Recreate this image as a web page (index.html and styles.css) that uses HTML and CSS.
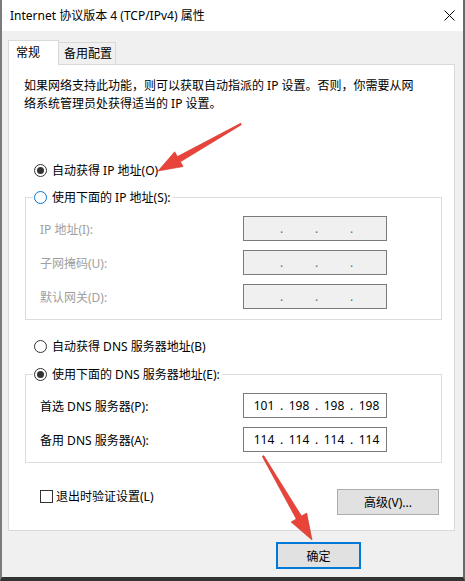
FILE: index.html
```html
<!DOCTYPE html>
<html lang="zh-CN">
<head>
<meta charset="utf-8">
<title>Internet 协议版本 4 (TCP/IPv4) 属性</title>
<link rel="stylesheet" href="styles.css">
</head>
<body>
<div class="window">
  <div class="titlebar">
    <span class="title">Internet 协议版本 4 (TCP/IPv4) 属性</span>
    <svg class="close" width="11" height="11" viewBox="0 0 11 11"><path d="M0.5 0.5 L10.5 10.5 M10.5 0.5 L0.5 10.5" stroke="#000" stroke-width="1" fill="none"/></svg>
  </div>
  <div class="client">
    <div class="tabs">
      <div class="tab active">常规</div>
      <div class="tab second">备用配置</div>
    </div>
    <div class="panel">
      <p class="desc">如果网络支持此功能，则可以获取自动指派的 IP 设置。否则，你需要从网络系统管理员处获得适当的 IP 设置。</p>
      <div class="opt first"><span class="radio checked"></span>自动获得 IP 地址(O)</div>
      <fieldset class="group">
        <legend><span class="radio focus"></span>使用下面的 IP 地址(S):</legend>
        <div class="field disabled"><span class="label">IP 地址(I):</span>
          <div class="ip off"><span class="oct"></span><span class="dot">.</span><span class="oct"></span><span class="dot">.</span><span class="oct"></span><span class="dot">.</span><span class="oct"></span></div>
        </div>
        <div class="field disabled"><span class="label">子网掩码(U):</span>
          <div class="ip off"><span class="oct"></span><span class="dot">.</span><span class="oct"></span><span class="dot">.</span><span class="oct"></span><span class="dot">.</span><span class="oct"></span></div>
        </div>
        <div class="field disabled"><span class="label">默认网关(D):</span>
          <div class="ip off"><span class="oct"></span><span class="dot">.</span><span class="oct"></span><span class="dot">.</span><span class="oct"></span><span class="dot">.</span><span class="oct"></span></div>
        </div>
      </fieldset>
      <div class="opt dns"><span class="radio"></span>自动获得 DNS 服务器地址(B)</div>
      <fieldset class="group second">
        <legend><span class="radio checked"></span>使用下面的 DNS 服务器地址(E):</legend>
        <div class="field"><span class="label">首选 DNS 服务器(P):</span>
          <div class="ip"><span class="oct">101</span><span class="dot">.</span><span class="oct">198</span><span class="dot">.</span><span class="oct">198</span><span class="dot">.</span><span class="oct">198</span></div>
        </div>
        <div class="field"><span class="label">备用 DNS 服务器(A):</span>
          <div class="ip"><span class="oct">114</span><span class="dot">.</span><span class="oct">114</span><span class="dot">.</span><span class="oct">114</span><span class="dot">.</span><span class="oct">114</span></div>
        </div>
      </fieldset>
      <div class="bottom">
        <div class="check"><span class="box"></span>退出时验证设置(L)</div>
        <button class="btn">高级(V)...</button>
      </div>
    </div>
    <div class="footer">
      <button class="btn default">确定</button>
    </div>
  </div>
</div>
<svg class="arrows" width="465" height="581" viewBox="0 0 465 581">
  <polygon points="158,171 183.1,166.6 180.4,161.8 241.4,124.7 240.6,123.3 177.4,156.6 174.7,151.8" fill="#e8443a" stroke="#d0302a" stroke-width="0.6" stroke-linejoin="round"/>
  <polygon points="312,540 306.7,513 301.5,516 263.7,455.6 262.3,456.4 296.3,519 291.1,522" fill="#e8443a" stroke="#d0302a" stroke-width="0.6" stroke-linejoin="round"/>
</svg>
</body>
</html>
```
FILE: styles.css
```css
* { box-sizing: border-box; }
html, body { margin: 0; padding: 0; }
body {
  position: relative;
  width: 465px;
  height: 581px;
  overflow: hidden;
  font-family: "Noto Sans", "Noto Sans CJK SC", sans-serif;
  font-size: 12px;
  color: #000;
  background: #f0f0f0;
}
.window {
  width: 465px;
  height: 581px;
  display: flex;
  flex-direction: column;
  background: #f0f0f0;
  border-left: 2px solid #7b7b7b;
  border-right: 2px solid #6a6a6a;
  border-bottom: 4px solid #333;
}
.titlebar {
  height: 31px;
  flex: none;
  background: #fff;
  display: flex;
  align-items: center;
  justify-content: space-between;
  padding: 0 8px;
}
.title { line-height: 18px; }
.close { display: block; }
.client {
  flex: 1;
  padding: 9px 8px 0 6px;
}
.tabs {
  display: flex;
  align-items: flex-end;
  height: 24px;
}
.tab {
  border: 1px solid #d9d9d9;
  border-bottom: none;
  background: #f0f0f0;
  height: 22px;
  line-height: 21px;
}
.tab.active {
  width: 51px;
  height: 25px;
  line-height: 23px;
  background: #fff;
  padding-left: 7px;
  margin-bottom: -1px;
  position: relative;
  z-index: 1;
}
.tab.second {
  width: 57px;
  border-left: none;
  padding-left: 5px;
}
.panel {
  height: 467px;
  background: #fff;
  border: 1px solid #d9d9d9;
  padding: 12px 13px 0 15px;
}
.desc {
  margin: 0;
  width: 398px;
  line-height: 18px;
}
.opt {
  display: flex;
  align-items: center;
  height: 18px;
  margin-left: 10px;
}
.opt.first { margin-top: 48px; }
.opt.dns { margin-top: 17px; }
.radio {
  position: relative;
  flex: none;
  width: 13px;
  height: 13px;
  border: 1px solid #333;
  border-radius: 50%;
  background: #fff;
  margin-right: 5px;
}
.radio.checked::after {
  content: "";
  position: absolute;
  left: 2px;
  top: 2px;
  width: 7px;
  height: 7px;
  border-radius: 50%;
  background: #333;
}
.radio.focus { border-color: #0078d7; }
fieldset.group {
  margin: 9px 0 0 1px;
  width: 417px;
  border: 1px solid #dcdcdc;
  padding: 10px 0 10px 14px;
}
fieldset.group.second { margin-top: 10px; }
legend {
  margin-left: -7px;
  padding: 0 2px 0 1px;
  height: 18px;
  display: flex;
  align-items: center;
}
.field {
  display: flex;
  align-items: center;
  height: 25px;
}
.field + .field { margin-top: 9px; }
.field .label { width: 203px; }
.field.disabled .label { color: #a0a0a0; }
.ip {
  width: 144px;
  height: 25px;
  border: 1px solid #7a7a7a;
  background: #fff;
  display: flex;
  align-items: center;
  padding-left: 7px;
  font-size: 12px;
}
.ip.off {
  background: #f0f0f0;
  color: #6d6d6d;
}
.oct { width: 26px; text-align: center; }
.dot { width: 9px; text-align: center; }
.bottom {
  display: flex;
  justify-content: space-between;
  align-items: flex-start;
  margin-top: 26px;
  padding-left: 16px;
  padding-right: 2px;
}
.check {
  display: flex;
  align-items: center;
  height: 18px;
  margin-top: -2px;
}
.box {
  width: 13px;
  height: 13px;
  border: 1px solid #333;
  margin-right: 3px;
}
.btn {
  width: 102px;
  height: 26px;
  background: #e1e1e1;
  border: 1px solid #adadad;
  padding: 0;
  font: inherit;
  color: #000;
}
.footer {
  padding-left: 268px;
  margin-top: 11px;
}
.btn.default {
  width: 85px;
  height: 27px;
  border: 2px solid #0078d7;
}
.arrows {
  position: absolute;
  left: 0;
  top: 0;
  pointer-events: none;
}
```
